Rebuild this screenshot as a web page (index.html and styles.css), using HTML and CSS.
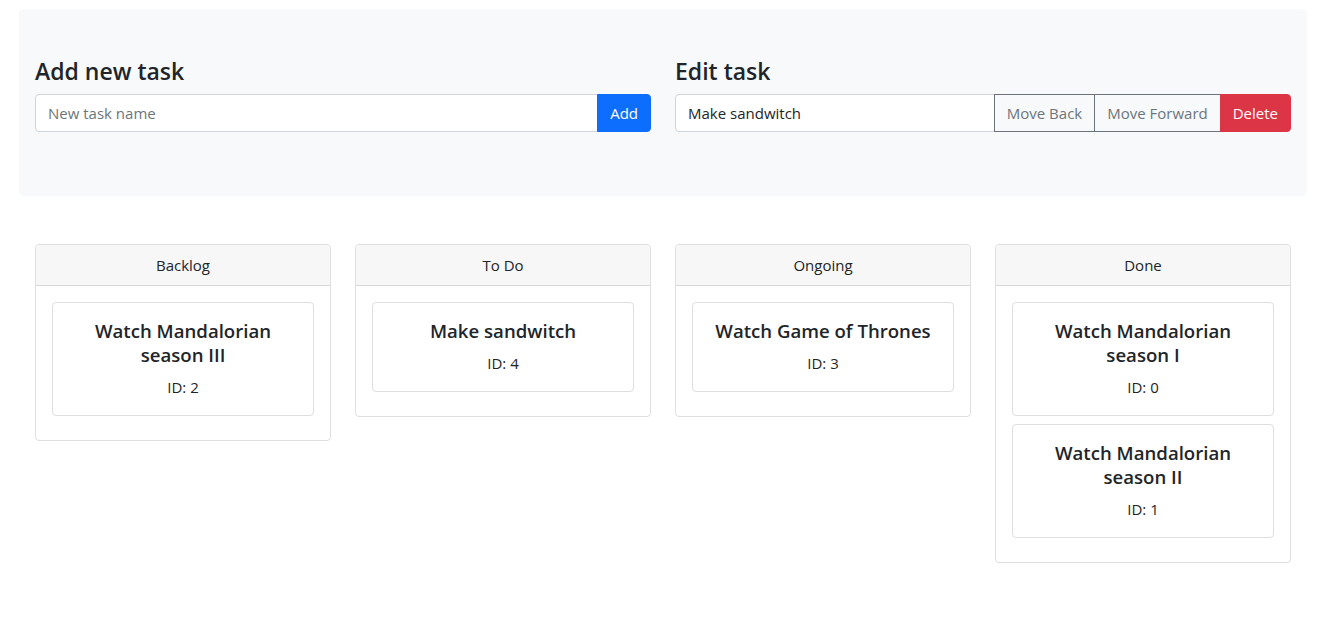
FILE: index.html
```html
<!DOCTYPE html>
<html>
<head>
<meta charset="utf-8">
<link rel="stylesheet" href="styles.css">
</head>
<body>
<div class="page">
  <section class="panel">
    <div class="panel-row">
      <div class="panel-col">
        <h4 class="heading">Add new task</h4>
        <div class="input-group">
          <input class="field" type="text" placeholder="New task name">
          <button class="btn btn-primary">Add</button>
        </div>
      </div>
      <div class="panel-col">
        <h4 class="heading">Edit task</h4>
        <div class="input-group">
          <input class="field" type="text" value="Make sandwitch">
          <button class="btn btn-outline">Move Back</button>
          <button class="btn btn-outline">Move Forward</button>
          <button class="btn btn-danger">Delete</button>
        </div>
      </div>
    </div>
  </section>
  <section class="board">
    <div class="column">
      <div class="column-header">Backlog</div>
      <div class="column-body">
        <div class="task"><h5 class="task-title">Watch Mandalorian season III</h5><div class="task-id">ID: 2</div></div>
      </div>
    </div>
    <div class="column">
      <div class="column-header">To Do</div>
      <div class="column-body">
        <div class="task"><h5 class="task-title">Make sandwitch</h5><div class="task-id">ID: 4</div></div>
      </div>
    </div>
    <div class="column">
      <div class="column-header">Ongoing</div>
      <div class="column-body">
        <div class="task"><h5 class="task-title">Watch Game of Thrones</h5><div class="task-id">ID: 3</div></div>
      </div>
    </div>
    <div class="column">
      <div class="column-header">Done</div>
      <div class="column-body">
        <div class="task"><h5 class="task-title">Watch Mandalorian season I</h5><div class="task-id">ID: 0</div></div>
        <div class="task"><h5 class="task-title">Watch Mandalorian season II</h5><div class="task-id">ID: 1</div></div>
      </div>
    </div>
  </section>
</div>
</body>
</html>
```
FILE: styles.css
```css
* { box-sizing: border-box; }
html, body { margin: 0; padding: 0; background: #fff; }
body {
  font-family: "Open Sans", "Noto Sans", sans-serif;
  font-size: 16px;
  line-height: 1.5;
  color: #212529;
}
.page {
  width: 1288px;
  margin: 9px 0 0 19px;
}
.panel {
  background: #f8f9fa;
  border-radius: 5px;
  padding: 48px 16px 48px 16px;
}
.panel-row {
  display: flex;
  gap: 24px;
}
.panel-col { flex: 1 1 0; min-width: 0; }
.heading {
  margin: 0 0 8px 0;
  font-size: 23px;
  font-weight: 600;
  line-height: 29px;
}
.input-group {
  display: flex;
  margin-bottom: 16px;
  height: 38px;
}
.field {
  flex: 1 1 auto;
  min-width: 0;
  font: inherit;
  font-size: 15px;
  color: #212529;
  border: 1px solid #ced4da;
  border-radius: 4px 0 0 4px;
  padding: 6px 12px;
  background: #fff;
  outline: none;
}
.field::placeholder { color: #6c757d; }
.btn {
  font: inherit;
  font-size: 15px;
  padding: 6px 12px;
  border: 1px solid transparent;
  white-space: nowrap;
  margin-left: -1px;
}
.btn:last-child { border-radius: 0 4px 4px 0; }
.btn-primary { background: #0d6efd; border-color: #0d6efd; color: #fff; }
.btn-outline { background: #f8f9fa; border-color: #6c757d; color: #6c757d; }
.btn-danger { background: #dc3545; border-color: #dc3545; color: #fff; }
.board {
  display: flex;
  gap: 24px;
  align-items: flex-start;
  margin-top: 48px;
  padding: 0 16px;
}
.column {
  flex: 1 1 0;
  border: 1px solid rgba(0,0,0,.125);
  border-radius: 4px;
}
.column-header {
  background: #f7f7f7;
  border-bottom: 1px solid rgba(0,0,0,.125);
  padding: 8px 16px;
  text-align: center;
  font-size: 15px;
  line-height: 24px;
  border-radius: 3px 3px 0 0;
}
.column-body { padding: 16px 16px 16px 16px; }
.task {
  border: 1px solid rgba(0,0,0,.125);
  border-radius: 4px;
  padding: 16px;
  text-align: center;
  margin-bottom: 8px;
}
.task-title {
  margin: 0 0 8px 0;
  font-size: 18.6px;
  font-weight: 600;
  line-height: 24px;
}
.task-id { font-size: 15px; line-height: 24px; }
```
